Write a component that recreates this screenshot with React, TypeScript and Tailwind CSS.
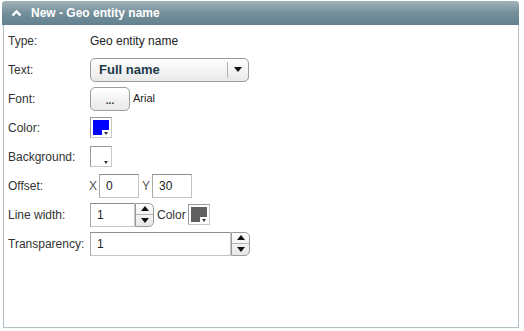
import React from "react";

function Swatch({ color }: { color: string }) {
  return (
    <div className="relative w-[22px] h-[21px] border border-[#9a9a9a] border-r-[#c8c8c8] border-b-[#c8c8c8] bg-white p-[2px]">
      <div className="w-full h-full" style={{ background: color }} />
      <div className="absolute right-[1px] bottom-[1px] w-[8px] h-[6px] bg-white flex items-center justify-center">
        <div className="w-0 h-0 border-l-[2px] border-r-[2px] border-t-[3px] border-l-transparent border-r-transparent border-t-[#333]" />
      </div>
    </div>
  );
}

function Spinner() {
  return (
    <div className="flex flex-col w-[19px] h-[24px] border border-[#9c9c9c] rounded-r-[5px] bg-gradient-to-b from-white to-[#e6e6e6] overflow-hidden">
      <div className="flex-1 flex items-center justify-center border-b border-[#b5b5b5]">
        <div className="w-0 h-0 border-l-[4px] border-r-[4px] border-b-[5px] border-l-transparent border-r-transparent border-b-[#111]" />
      </div>
      <div className="flex-1 flex items-center justify-center">
        <div className="w-0 h-0 border-l-[4px] border-r-[4px] border-t-[5px] border-l-transparent border-r-transparent border-t-[#111]" />
      </div>
    </div>
  );
}

function Input({ w, value }: { w: string; value: string }) {
  return (
    <div
      className={`${w} h-[24px] border border-[#c4c4c4] border-t-[#8e8e8e] border-l-[#a8a8a8] bg-white flex items-center pl-[6px] text-[12px] text-[#222]`}
    >
      {value}
    </div>
  );
}

function Row({ label, children }: { label: string; children?: React.ReactNode }) {
  return (
    <div className="flex items-center h-[29px]">
      <div className="w-[82px] text-[12px] text-[#333]">{label}</div>
      <div className="flex items-center">{children}</div>
    </div>
  );
}

export default function App() {
  return (
    <div
      className="w-[524px] h-[331px] bg-white pt-[1px] pl-[2px]"
      style={{ fontFamily: '"Liberation Sans", Arial, sans-serif' }}
    >
      <div className="w-[517px]">
        <div className="h-[24px] rounded-t-[3px] bg-gradient-to-b from-[#a3b3bb] via-[#748f9a] to-[#628190] flex items-center pl-[9px]">
          <svg width="11" height="8" viewBox="0 0 11 8" className="mr-[9px]">
            <path d="M1.5 6.5 L5.5 2.5 L9.5 6.5" stroke="white" strokeWidth="2.4" fill="none" />
          </svg>
          <span className="text-white font-bold text-[12px]">New - Geo entity name</span>
        </div>
        <div className="ml-[1px] h-[303px] border-l border-r border-b border-[#b4c0c7] pl-[4px] pt-[1px]">
          <Row label="Type:">
            <span className="text-[12px] text-[#222]">Geo entity name</span>
          </Row>
          <Row label="Text:">
            <div className="w-[159px] h-[24px] rounded-[5px] border border-[#9c9c9c] bg-gradient-to-b from-white to-[#e9e9e9] flex items-center">
              <span className="flex-1 pl-[8px] text-[13px] font-bold text-[#1d3a47]">Full name</span>
              <div className="w-px h-[16px] bg-[#b0b0b0]" />
              <div className="w-[20px] flex items-center justify-center">
                <div className="w-0 h-0 border-l-[4px] border-r-[4px] border-t-[5px] border-l-transparent border-r-transparent border-t-[#111]" />
              </div>
            </div>
          </Row>
          <Row label="Font:">
            <div className="w-[40px] h-[24px] rounded-[5px] border border-[#9c9c9c] bg-gradient-to-b from-white to-[#e9e9e9] flex items-center justify-center text-[10px] font-bold text-[#333] pt-[3px]">
              ...
            </div>
            <span className="ml-[3px] text-[11px] text-[#222]">Arial</span>
          </Row>
          <Row label="Color:">
            <Swatch color="#0000ff" />
          </Row>
          <Row label="Background:">
            <Swatch color="#ffffff" />
          </Row>
          <Row label="Offset:">
            <span className="text-[12px] text-[#555] -ml-[1px] mr-[2px]">X</span>
            <Input w="w-[40px]" value="0" />
            <span className="text-[12px] text-[#555] ml-[3px] mr-[2px]">Y</span>
            <Input w="w-[40px]" value="30" />
          </Row>
          <Row label="Line width:">
            <Input w="w-[45px]" value="1" />
            <Spinner />
            <span className="ml-[3px] mr-[2px] text-[12px] text-[#333]">Color</span>
            <Swatch color="#606060" />
          </Row>
          <Row label="Transparency:">
            <Input w="w-[141px]" value="1" />
            <Spinner />
          </Row>
        </div>
      </div>
    </div>
  );
}
